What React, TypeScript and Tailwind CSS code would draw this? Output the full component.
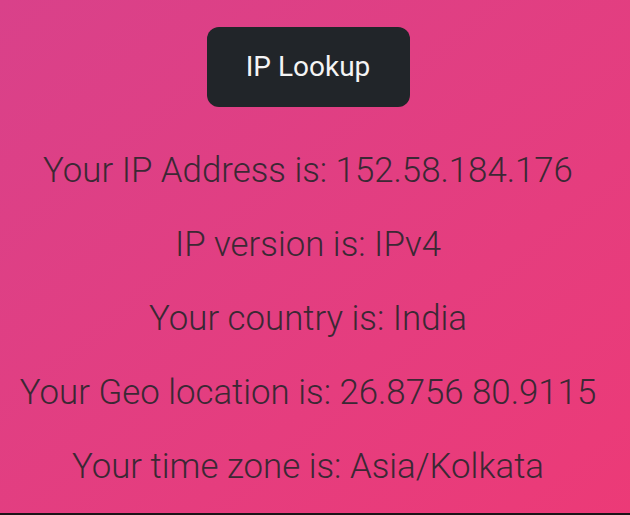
export default function App() {
  const lines = [
    "Your IP Address is: 152.58.184.176",
    "IP version is: IPv4",
    "Your country is: India",
    "Your Geo location is: 26.8756 80.9115",
    "Your time zone is: Asia/Kolkata",
  ];

  return (
    <div className="flex h-[515px] w-[630px] flex-col overflow-hidden bg-gradient-to-br from-[#d9418a] to-[#ec3a77] font-['Roboto','Open_Sans',sans-serif]">
      <div className="flex flex-1 flex-col items-center pt-[27px] pr-[14px]">
        <button className="h-[80px] w-[203px] rounded-[12px] bg-[#212529] text-[28px] text-[#f4f4f4]">
          IP Lookup
        </button>
        <div className="mt-[26px] flex flex-col items-center">
          {lines.map((line) => (
            <p key={line} className="h-[74px] text-[34.8px] font-light leading-[74px] text-[#3b2834]">
              {line}
            </p>
          ))}
        </div>
      </div>
      <div className="h-[2px] bg-[#1c1418]" />
    </div>
  );
}
